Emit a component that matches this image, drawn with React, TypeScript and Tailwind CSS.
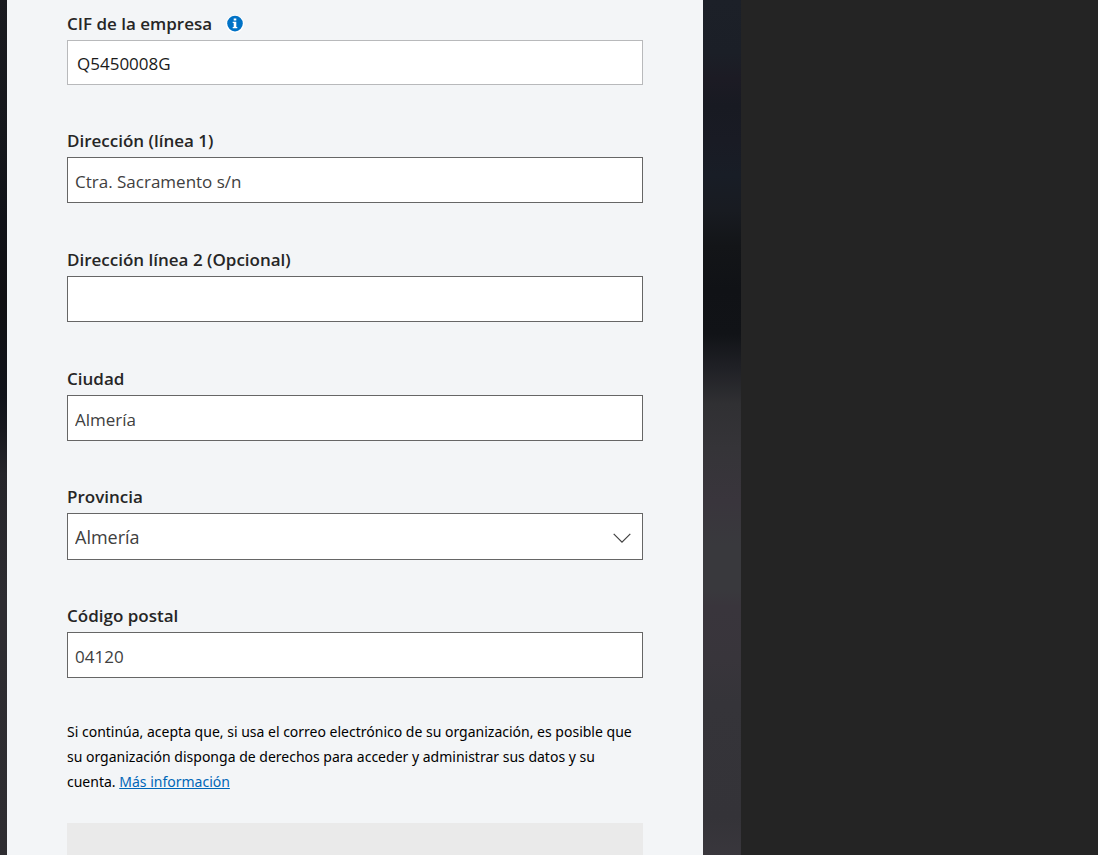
import { useState } from "react";
import type { ReactNode } from "react";

const inputClass =
  "block h-[46px] w-full border border-[#666666] bg-white px-[7px] pt-[2px] text-[17px] text-[#404040] outline-none focus:border-[#0067b8]";

interface FieldProps {
  id: string;
  label: string;
  hint?: ReactNode;
  children: ReactNode;
}

function Field({ id, label, hint, children }: FieldProps) {
  return (
    <div>
      <div className="flex h-8 items-center gap-[14px]">
        <label htmlFor={id} className="text-[17px] leading-6 font-semibold text-[#262626]">
          {label}
        </label>
        {hint}
      </div>
      {children}
    </div>
  );
}

function InfoIcon() {
  return (
    <svg viewBox="0 0 18 18" className="size-[18px]" aria-hidden="true">
      <circle cx="9" cy="9" r="9" fill="#ffffff" />
      <circle cx="9" cy="8.6" r="7.8" fill="#0072c6" />
      <path d="M7.7 3.5h2.6v2H7.7zM6.7 6.7h3.6v5.4h1v1.2H6.7v-1.2h1V7.9h-1z" fill="#ffffff" />
    </svg>
  );
}

export default function App() {
  const [form, setForm] = useState({
    cif: "Q5450008G",
    line1: "Ctra. Sacramento s/n",
    line2: "",
    city: "Almería",
    province: "Almería",
    postal: "04120",
  });
  const update = (key: keyof typeof form) => (e: { target: { value: string } }) =>
    setForm({ ...form, [key]: e.target.value });

  return (
    <div className="grid h-screen grid-cols-[741fr_357fr] overflow-hidden bg-[#242424] font-['Open_Sans','Noto_Sans',sans-serif]">
      <div className="grid grid-cols-[7px_1fr_38px] overflow-hidden">
        <div className="bg-[linear-gradient(to_bottom,#1a1b20_0%,#15171c_15%,#101218_25%,#101013_34%,#10131a_45%,#18191f_49%,#25252a_54%,#2d2c31_68%,#2e2d31_100%)]" />
        <main className="bg-[#f3f5f7] px-[60px] pt-2">
          <form onSubmit={(e) => e.preventDefault()}>
            <div className="flex flex-col gap-10">
              <Field
                id="cif"
                label="CIF de la empresa"
                hint={
                  <button type="button" aria-label="Información sobre el CIF">
                    <InfoIcon />
                  </button>
                }
              >
                <input
                  id="cif"
                  value={form.cif}
                  onChange={update("cif")}
                  className="block h-[45px] w-full border border-[#b8b9bb] bg-white px-[9px] pt-[2px] text-[17px] text-[#1a1a1a] outline-none"
                />
              </Field>
              <div className="flex flex-col gap-[41px]">
                <Field id="line1" label="Dirección (línea 1)">
                  <input id="line1" value={form.line1} onChange={update("line1")} className={inputClass} />
                </Field>
                <Field id="line2" label="Dirección línea 2 (Opcional)">
                  <input id="line2" value={form.line2} onChange={update("line2")} className={inputClass} />
                </Field>
                <Field id="city" label="Ciudad">
                  <input id="city" value={form.city} onChange={update("city")} className={inputClass} />
                </Field>
              </div>
              <Field id="province" label="Provincia">
                <div className="relative">
                  <select
                    id="province"
                    value={form.province}
                    onChange={update("province")}
                    className="block h-[47px] w-full appearance-none border border-[#666666] bg-white px-[7px] pt-[2px] text-[18px] text-[#404040] outline-none"
                  >
                    <option>Almería</option>
                    <option>Granada</option>
                    <option>Málaga</option>
                  </select>
                  <svg
                    viewBox="0 0 18 10"
                    className="pointer-events-none absolute top-5 right-3 h-[10px] w-[18px]"
                    fill="none"
                    stroke="#404040"
                    strokeWidth="1.2"
                    aria-hidden="true"
                  >
                    <path d="M0.7 0.8L9 9.1L17.3 0.8" />
                  </svg>
                </div>
              </Field>
              <Field id="postal" label="Código postal">
                <input id="postal" value={form.postal} onChange={update("postal")} className={inputClass} />
              </Field>
            </div>
            <p className="mt-[41px] font-['Noto_Sans','Open_Sans',sans-serif] text-[14px] leading-[25px] text-black">
              Si continúa, acepta que, si usa el correo electrónico de su organización, es posible que su
              organización disponga de derechos para acceder y administrar sus datos y su cuenta.{" "}
              <a href="#info" className="text-[#0067b8] underline">
                Más información
              </a>
            </p>
            <button type="submit" disabled aria-label="Continuar" className="mt-[29px] block h-14 w-full bg-[#eaeaea]" />
          </form>
        </main>
        <div className="bg-[linear-gradient(to_bottom,#1c2028_0%,#1b1f27_6%,#1c1b24_9%,#181a22_12%,#191b24_16%,#181d26_20%,#181b21_24%,#131518_28%,#101216_33%,#111317_38%,#202126_42%,#303033_46%,#353438_51%,#39353c_57%,#39393d_62%,#39393d_67%,#39353c_69%,#38353b_75%,#353439_80%,#343338_93%,#3c393f_100%)]" />
      </div>
    </div>
  );
}
